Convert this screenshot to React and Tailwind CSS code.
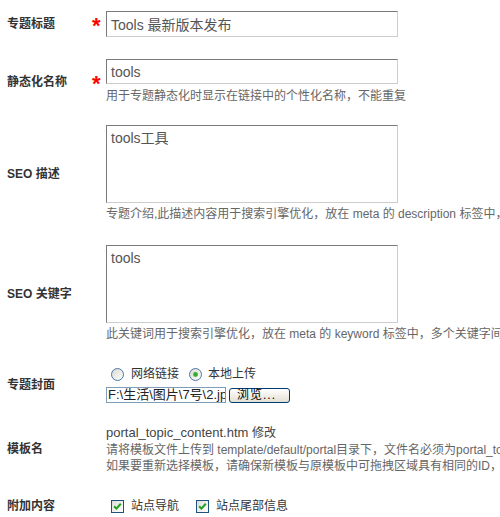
import React from "react";

function Radio({ checked }) {
  return (
    <svg width="13" height="13" viewBox="0 0 13 13" className="shrink-0">
      <defs>
        <linearGradient id={checked ? "rgc" : "rgu"} x1="0" y1="0" x2="1" y2="1">
          <stop offset="0" stopColor="#d8d8d2" />
          <stop offset="1" stopColor="#ffffff" />
        </linearGradient>
      </defs>
      <circle cx="6.5" cy="6.5" r="6" fill={`url(#${checked ? "rgc" : "rgu"})`} stroke="#4f77a3" strokeWidth="1" />
      {checked && <circle cx="6.5" cy="6.5" r="2.4" fill="#2fb02f" />}
    </svg>
  );
}

function Check() {
  return (
    <svg width="13" height="13" viewBox="0 0 13 13" className="shrink-0">
      <defs>
        <linearGradient id="cbg" x1="0" y1="0" x2="1" y2="1">
          <stop offset="0" stopColor="#dcdcd6" />
          <stop offset="1" stopColor="#ffffff" />
        </linearGradient>
      </defs>
      <rect x="0.5" y="0.5" width="12" height="12" fill="url(#cbg)" stroke="#1c5180" strokeWidth="1" />
      <path d="M3.2 6.2 L5.4 8.6 L9.8 3.8" fill="none" stroke="#21a121" strokeWidth="2" />
    </svg>
  );
}

function Label({ children }) {
  return (
    <div className="w-[86px] shrink-0 pl-[7px] font-bold text-[#333] text-[12px] leading-[16px]">{children}</div>
  );
}

function Star({ show }) {
  return (
    <div className="w-[20px] h-[16px] shrink-0 pl-[6px] text-[#f00] font-bold text-[22px] leading-[16px] relative top-[2px]">
      {show ? "*" : ""}
    </div>
  );
}

const inputCls =
  "block w-[292px] border border-t-[#7b7b7b] border-l-[#7b7b7b] border-r-[#cdcdcd] border-b-[#cdcdcd] bg-white pl-[4px] text-[14px] text-[#555] outline-none font-['Liberation_Sans','Noto_Sans_CJK_SC',sans-serif]";

export default function App() {
  return (
    <div className="w-[500px] h-[517px] overflow-hidden bg-white font-['Liberation_Sans','Noto_Sans_CJK_SC',sans-serif] text-[12px] text-[#666]">
      <div className="pt-[11px]">
        {/* Row 1 */}
        <div className="flex items-center">
          <Label>专题标题</Label>
          <Star show />
          <input readOnly defaultValue="Tools 最新版本发布" className={`${inputCls} h-[26px]`} />
        </div>

        {/* Row 2 */}
        <div className="flex items-center mt-[22px]">
          <Label>静态化名称</Label>
          <Star show />
          <div>
            <input readOnly defaultValue="tools" className={`${inputCls} h-[25px]`} />
            <div className="mt-[4px] leading-[16px] whitespace-nowrap">用于专题静态化时显示在链接中的个性化名称，不能重复</div>
          </div>
        </div>

        {/* Row 3 */}
        <div className="flex items-center mt-[21px]">
          <Label>SEO 描述</Label>
          <Star />
          <div>
            <textarea
              readOnly
              defaultValue="tools工具"
              className={`${inputCls} h-[78px] resize-none pt-[3px] leading-[18px]`}
            />
            <div className="mt-[3px] leading-[16px] whitespace-nowrap">
              专题介绍,此描述内容用于搜索引擎优化，放在 meta 的 description 标签中，多个关键字间用半角逗号隔开
            </div>
          </div>
        </div>

        {/* Row 4 */}
        <div className="flex items-center mt-[23px]">
          <Label>SEO 关键字</Label>
          <Star />
          <div>
            <textarea
              readOnly
              defaultValue="tools"
              className={`${inputCls} h-[78px] resize-none pt-[3px] leading-[18px]`}
            />
            <div className="mt-[3px] leading-[16px] whitespace-nowrap">
              此关键词用于搜索引擎优化，放在 meta 的 keyword 标签中，多个关键字间用半角逗号隔开
            </div>
          </div>
        </div>

        {/* Row 5 */}
        <div className="flex items-center mt-[24px]">
          <Label>专题封面</Label>
          <Star />
          <div>
            <div className="flex items-center h-[16px] pl-[5px]">
              <Radio />
              <span className="ml-[7px] text-[#333]">网络链接</span>
              <span className="ml-[10px]"><Radio checked /></span>
              <span className="ml-[6px] text-[#333]">本地上传</span>
            </div>
            <div className="flex items-center mt-[5px] h-[16px]">
              <div className="w-[120px] h-[16px] border border-[#7f9db9] overflow-hidden whitespace-nowrap text-[13px] leading-[14px] text-[#222] pl-[1px]">
                F:\生活\图片\7号\2.jpg
              </div>
              <div className="ml-[3px] w-[61px] h-[15px] rounded-[3px] border border-[#003c74] bg-gradient-to-b from-white to-[#e3e0d3] text-black text-[12px] leading-[13px] pl-[7px] tracking-[1px]">
                浏览...
              </div>
            </div>
          </div>
        </div>

        {/* Row 6 */}
        <div className="flex items-center mt-[21px]">
          <Label>模板名</Label>
          <Star />
          <div className="whitespace-nowrap">
            <div className="text-[13px] leading-[18px] text-[#444]">
              portal_topic_content.htm <span className="text-[12px]">修改</span>
            </div>
            <div className="leading-[16px]">请将模板文件上传到 template/default/portal目录下，文件名必须为portal_topic_content_*.htm</div>
            <div className="leading-[16px]">如果要重新选择模板，请确保新模板与原模板中可拖拽区域具有相同的ID，否则会导致数据丢失</div>
          </div>
        </div>

        {/* Row 7 */}
        <div className="flex items-center mt-[24px]">
          <Label>附加内容</Label>
          <Star />
          <div className="flex items-center h-[16px] pl-[5px]">
            <Check />
            <span className="ml-[7px] text-[#333]">站点导航</span>
            <span className="ml-[17px]"><Check /></span>
            <span className="ml-[7px] text-[#333]">站点尾部信息</span>
          </div>
        </div>
      </div>
    </div>
  );
}
